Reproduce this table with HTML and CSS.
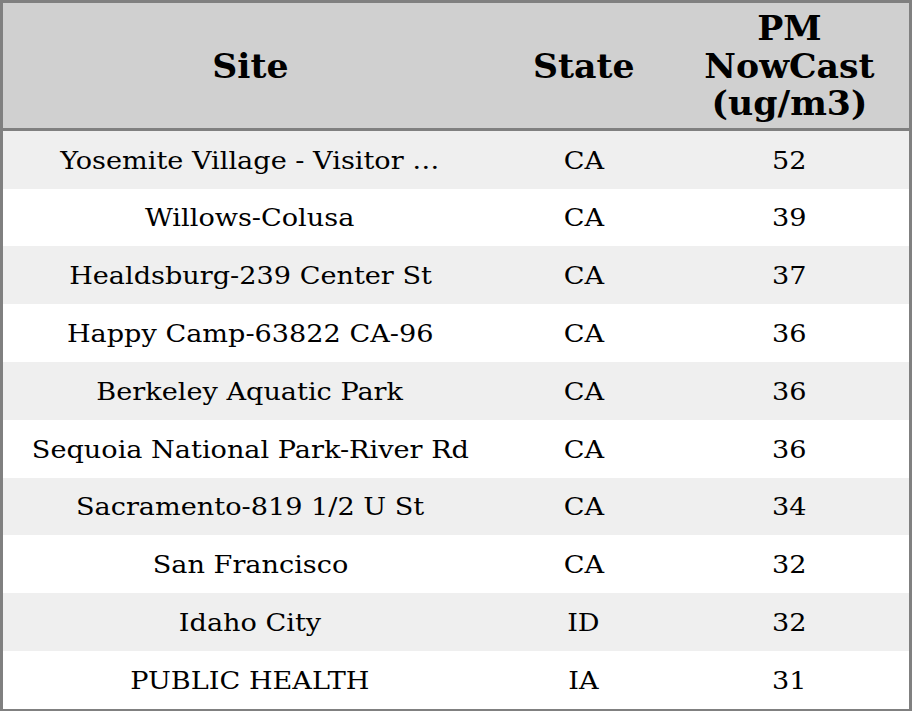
FILE: index.html
```html
<!DOCTYPE html>
<html>
<head>
<meta charset="utf-8">
<link rel="stylesheet" href="styles.css">
</head>
<body>
<table class="data">
  <colgroup>
    <col class="c-site">
    <col class="c-state">
    <col class="c-pm">
  </colgroup>
  <thead>
    <tr><th><span class="htxt">Site</span></th><th><span class="htxt">State</span></th><th><span class="htxt">PM<br>NowCast<br>(ug/m3)</span></th></tr>
  </thead>
  <tbody>
    <tr><td><span class="txt">Yosemite Village - Visitor …</span></td><td><span class="txt">CA</span></td><td><span class="txt">52</span></td></tr>
    <tr><td><span class="txt">Willows-Colusa</span></td><td><span class="txt">CA</span></td><td><span class="txt">39</span></td></tr>
    <tr><td><span class="txt">Healdsburg-239 Center St</span></td><td><span class="txt">CA</span></td><td><span class="txt">37</span></td></tr>
    <tr><td><span class="txt">Happy Camp-63822 CA-96</span></td><td><span class="txt">CA</span></td><td><span class="txt">36</span></td></tr>
    <tr><td><span class="txt">Berkeley Aquatic Park</span></td><td><span class="txt">CA</span></td><td><span class="txt">36</span></td></tr>
    <tr><td><span class="txt">Sequoia National Park-River Rd</span></td><td><span class="txt">CA</span></td><td><span class="txt">36</span></td></tr>
    <tr><td><span class="txt">Sacramento-819 1/2 U St</span></td><td><span class="txt">CA</span></td><td><span class="txt">34</span></td></tr>
    <tr><td><span class="txt">San Francisco</span></td><td><span class="txt">CA</span></td><td><span class="txt">32</span></td></tr>
    <tr><td><span class="txt">Idaho City</span></td><td><span class="txt">ID</span></td><td><span class="txt">32</span></td></tr>
    <tr><td><span class="txt">PUBLIC HEALTH</span></td><td><span class="txt">IA</span></td><td><span class="txt">31</span></td></tr>
  </tbody>
</table>
</body>
</html>
```
FILE: styles.css
```css
html, body {
  margin: 0;
  padding: 0;
  background: #ffffff;
}
.data {
  width: 912px;
  border-collapse: collapse;
  border: 3px solid #808080;
  font-family: "DejaVu Serif", serif;
  color: #000;
  table-layout: fixed;
}
.c-site { width: 494px; }
.c-state { width: 172px; }
.c-pm { width: 240px; }
.data th {
  background: #d0d0d0;
  font-size: 34px;
  font-weight: bold;
  line-height: 37.5px;
  padding: 7px 4px 5.4px;
  text-align: center;
  border-bottom: 3px solid #808080;
}
.htxt {
  display: inline-block;
  transform: scaleX(1.02);
}
.data td {
  font-size: 24px;
  line-height: 28px;
  padding: 15.8px 4px 14px;
  text-align: center;
  white-space: nowrap;
}
.txt {
  display: inline-block;
  transform: scaleX(1.13);
}
.data tbody tr:nth-child(odd) td {
  background: #efefef;
}
```
